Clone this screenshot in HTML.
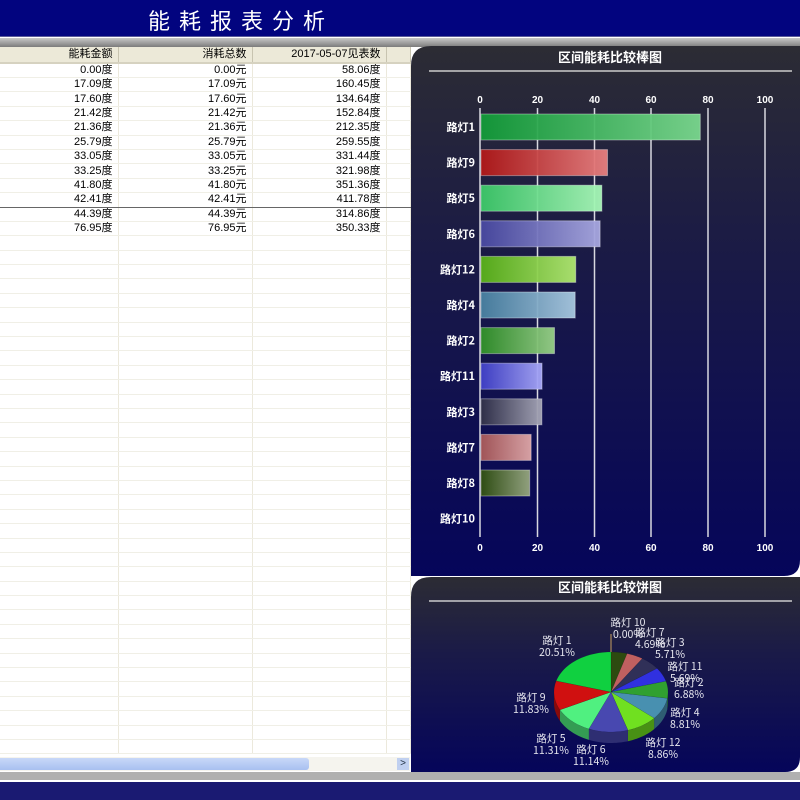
<!DOCTYPE html>
<html><head><meta charset="utf-8"><style>
*{margin:0;padding:0;box-sizing:border-box}
body{width:800px;height:800px;overflow:hidden;background:#fff;position:relative;font-family:"Liberation Sans","Noto Sans CJK SC",sans-serif}
.hdr{position:absolute;left:0;top:0;width:800px;height:37px;background:#02047f;border-bottom:1px solid #5a5a9a}
.hdr span{position:absolute;left:148px;top:4px;color:#fff;font-size:22px;letter-spacing:9px;font-family:"Noto Sans CJK SC",sans-serif}
.band{position:absolute;left:0;top:38px;width:800px;height:9px;background:linear-gradient(#c8c8c8,#7c7c7c)}
table{position:absolute;left:0;top:47px;border-collapse:collapse;font-size:11px;table-layout:fixed}
td{height:14.4px;border-right:1px solid #ece9dc;border-bottom:1px solid #f0efe6;text-align:right;padding-right:5px;line-height:13px;color:#000;white-space:nowrap;overflow:hidden}
tr.h td{background:#ece9d8;height:16px;border-bottom:2px solid #d6d2c0;border-right:1px solid #c8c4b0}
.sep td{border-bottom:1px solid #666}
.sb{position:absolute;left:0;top:757px;width:410px;height:14px;background:#f5f4ee}
.bottom{position:absolute;left:0;top:772px;width:800px;height:10px;background:#b0b0b0;border-bottom:2px solid #fff}
.foot{position:absolute;left:0;top:782px;width:800px;height:18px;background:#1a1a72}
</style></head><body>
<div class="hdr"><span>能耗报表分析</span></div>
<div class="band"></div>
<table id="t"><colgroup><col style="width:118px"><col style="width:134px"><col style="width:134px"><col style="width:24px"></colgroup>
<tr class="h"><td>能耗金额</td><td>消耗总数</td><td>2017-05-07见表数</td><td></td></tr>
<tr><td>0.00度</td><td>0.00元</td><td>58.06度</td><td></td></tr>
<tr><td>17.09度</td><td>17.09元</td><td>160.45度</td><td></td></tr>
<tr><td>17.60度</td><td>17.60元</td><td>134.64度</td><td></td></tr>
<tr><td>21.42度</td><td>21.42元</td><td>152.84度</td><td></td></tr>
<tr><td>21.36度</td><td>21.36元</td><td>212.35度</td><td></td></tr>
<tr><td>25.79度</td><td>25.79元</td><td>259.55度</td><td></td></tr>
<tr><td>33.05度</td><td>33.05元</td><td>331.44度</td><td></td></tr>
<tr><td>33.25度</td><td>33.25元</td><td>321.98度</td><td></td></tr>
<tr><td>41.80度</td><td>41.80元</td><td>351.36度</td><td></td></tr>
<tr class="sep"><td>42.41度</td><td>42.41元</td><td>411.78度</td><td></td></tr>
<tr><td>44.39度</td><td>44.39元</td><td>314.86度</td><td></td></tr>
<tr><td>76.95度</td><td>76.95元</td><td>350.33度</td><td></td></tr>
</table>
<div class="sb"><div style="position:absolute;left:0;top:1px;width:309px;height:12px;background:linear-gradient(#c8d8f8,#a8c0f0);border-radius:0 3px 3px 0"></div><div style="position:absolute;left:397px;top:1px;width:12px;height:12px;background:#c0d0f0;font-size:10px;line-height:12px;text-align:center;color:#234">&gt;</div></div>
<div class="bottom"></div>
<div class="foot"></div>
<svg style="position:absolute;left:0;top:0" width="800" height="800" id="s">
<defs>
<linearGradient id="pg1" x1="0" y1="0" x2="0" y2="1"><stop offset="0" stop-color="#2c2c34"/><stop offset="0.35" stop-color="#1c1c44"/><stop offset="1" stop-color="#05055a"/></linearGradient>
<linearGradient id="pg2" x1="0" y1="0" x2="0" y2="1"><stop offset="0" stop-color="#2c2c34"/><stop offset="0.4" stop-color="#1a1a48"/><stop offset="1" stop-color="#05055a"/></linearGradient>
</defs>
<path d="M411,66 Q411,46 431,46 L800,46 L800,560 Q800,576 784,576 L411,576 Z" fill="url(#pg1)"/>
<path d="M411,597 Q411,577 431,577 L800,577 L800,757 Q800,772 785,772 L411,772 Z" fill="url(#pg2)"/>
<text x="610" y="62" fill="#fff" font-size="13" font-weight="bold" text-anchor="middle" font-family="Noto Sans CJK SC,sans-serif">区间能耗比较棒图</text>
<line x1="429" y1="71" x2="792" y2="71" stroke="#ccc" stroke-width="1.5"/>
<text x="610" y="592" fill="#fff" font-size="13" font-weight="bold" text-anchor="middle" font-family="Noto Sans CJK SC,sans-serif">区间能耗比较饼图</text>
<line x1="429" y1="601" x2="792" y2="601" stroke="#ccc" stroke-width="1.5"/>
<g id="bars"></g><g id="pie"></g>
</svg>
<script>
var NS="http://www.w3.org/2000/svg",s=document.getElementById('s');
function el(t,a,p,txt){var e=document.createElementNS(NS,t);for(var k in a)e.setAttribute(k,a[k]);if(txt!=null)e.textContent=txt;(p||s).appendChild(e);return e;}
var tb=document.getElementById('t');
for(var i=0;i<36;i++){var r=tb.insertRow();for(var j=0;j<4;j++)r.insertCell();}
var defs=s.querySelector('defs');
var gx=[480,537.5,594.5,651,708,765];
var bars=document.getElementById('bars');
gx.forEach(function(x,i){el('line',{x1:x,y1:108,x2:x,y2:537,stroke:'#d8d8e0','stroke-width':1.5},bars);
el('text',{x:x,y:103,fill:'#fff','font-size':10,'font-weight':'bold','text-anchor':'middle'},bars,i*20);
el('text',{x:x,y:551,fill:'#fff','font-size':10,'font-weight':'bold','text-anchor':'middle'},bars,i*20);});
var data=[['路灯1',76.95,'#129a38','#7ad88e'],['路灯9',44.39,'#b01818','#e88080'],['路灯5',42.41,'#3cc868','#a8f8b8'],['路灯6',41.8,'#4848a0','#a8a8e0'],['路灯12',33.25,'#58b018','#b0e870'],['路灯4',33.05,'#4880a0','#a8c8e0'],['路灯2',25.79,'#309028','#98d088'],['路灯11',21.42,'#4040c8','#a8a8f8'],['路灯3',21.36,'#303048','#a8a8b8'],['路灯7',17.6,'#a85858','#e0a8a8'],['路灯8',17.09,'#305010','#98a880'],['路灯10',0,'#000','#000']];
data.forEach(function(d,i){var cy=127+i*35.6;
el('text',{x:475,y:cy+4,fill:'#fff','font-size':11,'font-weight':'bold','text-anchor':'end','font-family':'Noto Sans CJK SC,sans-serif'},bars,d[0]);
if(d[1]>0){var g=el('linearGradient',{id:'b'+i,x1:0,y1:0,x2:1,y2:0},defs);el('stop',{offset:0,'stop-color':d[2]},g);el('stop',{offset:1,'stop-color':d[3]},g);
el('rect',{x:481,y:cy-13,width:d[1]*2.85,height:26,fill:'url(#b'+i+')','fill-opacity':0.95,stroke:'rgba(255,255,255,0.35)'},bars);}});
var pie=document.getElementById('pie'),cx=611,cy=692,rx=57,ry=40,dp=11;
var sl=[[0,'#404020'],[4.56,'#2d4a10'],[4.69,'#c06060'],[5.71,'#303058'],[5.69,'#3030e0'],[6.88,'#30a030'],[8.81,'#4890b0'],[8.86,'#70e020'],[11.14,'#4848b0'],[11.31,'#50f080'],[11.83,'#d01010'],[20.51,'#10d040']];
function pt(a,dy){return [cx+rx*Math.sin(a),cy-ry*Math.cos(a)+(dy||0)];}
function dark(c){var n=parseInt(c.slice(1),16);var r=(n>>16)*0.65|0,g=((n>>8)&255)*0.65|0,b=(n&255)*0.65|0;return 'rgb('+r+','+g+','+b+')';}
var a=0,segs=[];sl.forEach(function(x){var a2=a+x[0]/100*2*Math.PI;segs.push([a,a2,x[1]]);a=a2;});
segs.forEach(function(g){var s1=Math.max(g[0],Math.PI/2),s2=Math.min(g[1],Math.PI*1.5);if(s2>s1){var d='';var n=20,p;for(var k=0;k<=n;k++){p=pt(s1+(s2-s1)*k/n);d+=(k?'L':'M')+p[0]+','+p[1];}for(k=n;k>=0;k--){p=pt(s1+(s2-s1)*k/n,dp);d+='L'+p[0]+','+p[1];}el('path',{d:d+'Z',fill:dark(g[2])},pie);}});
segs.forEach(function(g){if(g[1]-g[0]<0.001)return;var d='M'+cx+','+cy,n=24,p;for(var k=0;k<=n;k++){p=pt(g[0]+(g[1]-g[0])*k/n);d+='L'+p[0]+','+p[1];}el('path',{d:d+'Z',fill:g[2],stroke:'rgba(0,0,0,0.15)','stroke-width':0.5},pie);});
el('line',{x1:cx,y1:cy-ry,x2:cx,y2:cy-ry-18,stroke:'#c8a060'},pie);
var lb=[[628,626,'路灯 10','0.00%'],[557,644,'路灯 1','20.51%'],[650,636,'路灯 7','4.69%'],[670,646,'路灯 3','5.71%'],[685,670,'路灯 11','5.69%'],[689,686,'路灯 2','6.88%'],[685,716,'路灯 4','8.81%'],[663,746,'路灯 12','8.86%'],[531,701,'路灯 9','11.83%'],[551,742,'路灯 5','11.31%'],[591,753,'路灯 6','11.14%']];
lb.forEach(function(l){var t=el('text',{x:l[0],y:l[1],fill:'#e8e8f0','font-size':10.5,'text-anchor':'middle','font-family':'Noto Sans CJK SC,sans-serif'},pie);el('tspan',{x:l[0]},t,l[2]);el('tspan',{x:l[0],dy:12},t,l[3]);});
</script>
</body></html>
